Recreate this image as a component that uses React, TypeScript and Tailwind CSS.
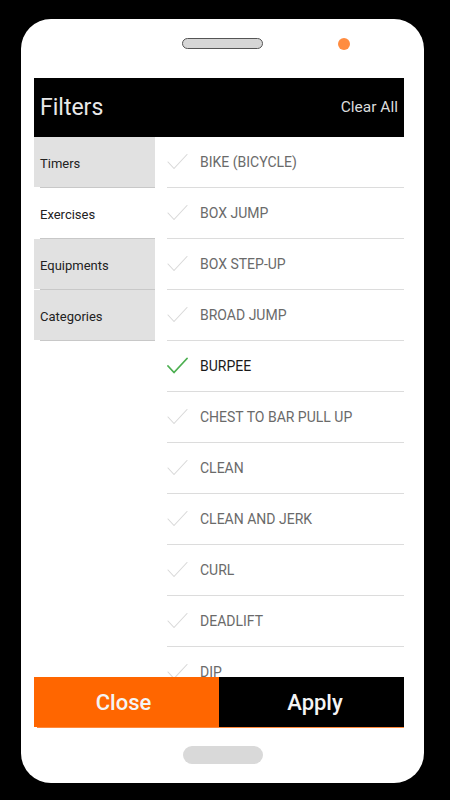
import { Fragment } from 'react'

const sections = [
  { label: 'Timers', active: false },
  { label: 'Exercises', active: true },
  { label: 'Equipments', active: false },
  { label: 'Categories', active: false },
]

const exercises = [
  { name: 'BIKE (BICYCLE)', checked: false },
  { name: 'BOX JUMP', checked: false },
  { name: 'BOX STEP-UP', checked: false },
  { name: 'BROAD JUMP', checked: false },
  { name: 'BURPEE', checked: true },
  { name: 'CHEST TO BAR PULL UP', checked: false },
  { name: 'CLEAN', checked: false },
  { name: 'CLEAN AND JERK', checked: false },
  { name: 'CURL', checked: false },
  { name: 'DEADLIFT', checked: false },
  { name: 'DIP', checked: false },
  { name: 'DUMBBELL SNATCH', checked: false },
]

function Check({ on }: { on: boolean }) {
  return (
    <svg width="22" height="18" viewBox="0 0 22 18" className="shrink-0">
      <polyline
        points="1,9 7,15.5 20,1.5"
        fill="none"
        stroke={on ? '#4caf50' : '#d8d8d8'}
        strokeWidth={on ? 1.8 : 1.1}
        strokeLinecap="round"
        strokeLinejoin="round"
      />
    </svg>
  )
}

export default function App() {
  return (
    <div className="min-h-[800px] w-[450px] bg-black pt-[19px] font-['Roboto','Liberation_Sans',sans-serif]">
      <div className="ml-[21px] flex h-[764px] w-[403px] flex-col rounded-[30px] bg-white">
        <div className="flex h-[59px] items-start pt-[19px]">
          <div className="ml-[161px] h-[11px] w-[81px] rounded-full border border-[#555] bg-[#d6d6d6]" />
          <div className="ml-[75px] h-[12px] w-[12px] rounded-full bg-[#ff8c40]" />
        </div>

        <div className="ml-[13px] flex h-[650px] w-[370px] flex-col">
          <div className="flex h-[59px] shrink-0 items-center justify-between bg-black pl-[6px] pr-[6px]">
            <span className="text-[23px] leading-none text-[#e8e8e8]">Filters</span>
            <span className="text-[15.5px] leading-none text-[#dcdcdc]">Clear All</span>
          </div>

          <div className="flex h-[540px] shrink-0 overflow-hidden">
            <div className="w-[121px] shrink-0">
              {sections.map((s) => (
                <Fragment key={s.label}>
                  <div
                    className={`flex h-[50px] items-center pl-[6px] pt-[3px] text-[13px] text-[#222] ${
                      s.active ? 'bg-white' : 'bg-[#e1e1e1]'
                    }`}
                  >
                    {s.label}
                  </div>
                  <div className="ml-[6px] h-px bg-[#c8c8c8]" />
                </Fragment>
              ))}
            </div>

            <div className="flex-1">
              {exercises.map((e) => (
                <div key={e.name} className="ml-[12px] flex h-[51px] flex-col">
                  <div className="flex h-[50px] items-center">
                    <Check on={e.checked} />
                    <span
                      className={`ml-[11px] text-[14px] ${e.checked ? 'text-[#1a1a1a]' : 'text-[#6a6a6a]'}`}
                    >
                      {e.name}
                    </span>
                  </div>
                  <div className="h-px bg-[#dcdcdc]" />
                </div>
              ))}
            </div>
          </div>

          <div className="flex h-[50px] shrink-0">
            <button className="flex w-[185px] items-center justify-center bg-[#ff6600] pr-[6px] text-[22px] font-medium text-[#f4f4f4]">
              Close
            </button>
            <button className="flex flex-1 items-center justify-center bg-black pl-[7px] text-[22px] font-medium text-[#f4f4f4]">
              Apply
            </button>
          </div>
          <div className="ml-[3px] h-px bg-[#ff8a3d]" />
        </div>

        <div className="mt-[18px] flex justify-center">
          <div className="h-[18px] w-[80px] rounded-full bg-[#d9d9d9]" />
        </div>
      </div>
    </div>
  )
}
